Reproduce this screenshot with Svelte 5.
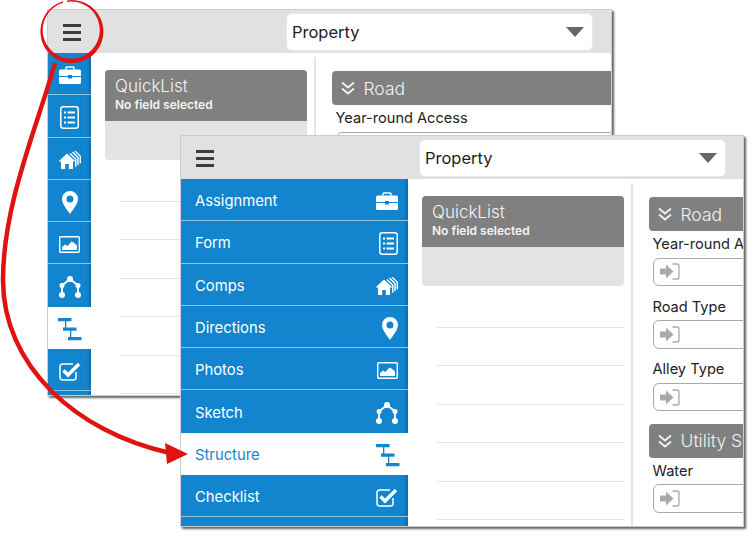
<script>
	const nav = [
		{ label: 'Assignment', icon: 'briefcase' },
		{ label: 'Form', icon: 'form' },
		{ label: 'Comps', icon: 'houses' },
		{ label: 'Directions', icon: 'pin' },
		{ label: 'Photos', icon: 'photo' },
		{ label: 'Sketch', icon: 'sketch' },
		{ label: 'Structure', icon: 'structure', active: true },
		{ label: 'Checklist', icon: 'check' }
	]

	const sections = [
		{ title: 'Road', fields: ['Year-round Access', 'Road Type', 'Alley Type'] },
		{ title: 'Utility Systems', fields: ['Water'] }
	]

	const listRows = [1, 2, 3, 4, 5, 6]
</script>

{#snippet icon(name)}
	{#if name === 'briefcase'}
		<svg class="ico" width="22" height="18" viewBox="0 0 22 18">
			<path d="M7 3.500V2a1 1 0 0 1 1-1h6a1 1 0 0 1 1 1v1.500" fill="none" stroke="currentColor" stroke-width="1.500" />
			<path d="M1.500 3.500h19a1.500 1.500 0 0 1 1.500 1.500v5h-9v-1h-4v1H0V5a1.500 1.500 0 0 1 1.500-1.500z" fill="currentColor" />
			<path d="M0 11h9v1.500h4V11h9v5.500a1.500 1.500 0 0 1-1.500 1.500h-19A1.500 1.500 0 0 1 0 16.500z" fill="currentColor" />
		</svg>
	{:else if name === 'form'}
		<svg class="ico" width="19" height="23" viewBox="0 0 19 23">
			<rect x="0.800" y="0.800" width="17.400" height="21.400" rx="2.500" fill="none" stroke="currentColor" stroke-width="1.500" />
			<path d="M4 5.500h2v2H4zM4 10.500h2v2H4zM4 15.500h2v2H4zM7.500 5.500H15v2H7.500zM7.500 10.500H15v2H7.500zM7.500 15.500H15v2H7.500z" fill="currentColor" />
		</svg>
	{:else if name === 'houses'}
		<svg class="ico" width="22" height="18" viewBox="0 0 22 18">
			<path d="M0 10 8 2.500 16 10l-1 1-1-.8V18h-4.200v-5H6.200v5H2v-7.800l-1 .8z" fill="currentColor" />
			<path d="M11 2.500l5.800 5.800v7.500M13.500 1l5.500 5.500v7.500M16 0l5.300 5.300v7" fill="none" stroke="currentColor" stroke-width="1.400" />
		</svg>
	{:else if name === 'pin'}
		<svg class="ico" width="16" height="23" viewBox="0 0 16 23">
			<path fill-rule="evenodd" d="M8 0a8 8 0 0 1 8 8c0 4.500-4.500 10-8 15-3.500-5-8-10.500-8-15a8 8 0 0 1 8-8zm0 4.500a3.500 3.500 0 1 0 0 7 3.500 3.500 0 0 0 0-7z" fill="currentColor" />
		</svg>
	{:else if name === 'photo'}
		<svg class="ico" width="21" height="17" viewBox="0 0 21 17">
			<rect x="0.700" y="0.700" width="19.600" height="15.600" rx="1" fill="none" stroke="currentColor" stroke-width="1.400" />
			<path d="M3 14v-3l3-2.500 2.500 1.500 4-4.500 2 1 3.500 3V14z" fill="currentColor" />
		</svg>
	{:else if name === 'sketch'}
		<svg class="ico" width="22" height="22" viewBox="0 0 22 22">
			<path d="M3 19V9.500L11 3l8 6.500V19" fill="none" stroke="currentColor" stroke-width="1.800" />
			<circle cx="3" cy="19" r="3" fill="currentColor" />
			<circle cx="3" cy="9.500" r="2.500" fill="currentColor" />
			<circle cx="11" cy="3" r="3" fill="currentColor" />
			<circle cx="19" cy="9.500" r="2.500" fill="currentColor" />
			<circle cx="19" cy="19" r="3" fill="currentColor" />
		</svg>
	{:else if name === 'structure'}
		<svg class="ico" width="24" height="23" viewBox="0 0 24 23">
			<path d="M0 0h13.500v3.300H0zM5 9.500h13.500v3.300H5zM10 19h13.500v3.300H10z" fill="currentColor" />
			<path d="M7 3h1.300v7H7zM12 12.500h1.300V19H12z" fill="currentColor" />
		</svg>
	{:else if name === 'check'}
		<svg class="ico" width="22" height="20" viewBox="0 0 22 20">
			<path d="M17 11v5.500a2.500 2.500 0 0 1-2.500 2.500h-11A2.500 2.500 0 0 1 1 16.500v-11A2.500 2.500 0 0 1 3.500 3H14" fill="none" stroke="currentColor" stroke-width="1.500" />
			<path d="M4.500 9.500 9 14 20 3" fill="none" stroke="currentColor" stroke-width="3.400" />
		</svg>
	{/if}
{/snippet}

{#snippet appWindow(expanded)}
	<div class="toolbar">
		<button class="burger" aria-label="Menu"><i></i><i></i><i></i></button>
		<div class="select">
			<span>Property</span>
			<svg width="18" height="10" viewBox="0 0 18 10"><path d="M0 0h18L9 10z" fill="#666" /></svg>
		</div>
	</div>
	<div class="body">
		<nav class="sidebar" class:expanded>
			{#each nav as item}
				<div class="nav-item" class:active={item.active}>
					{#if expanded}<span>{item.label}</span>{/if}
					{@render icon(item.icon)}
				</div>
			{/each}
			<div class="nav-rest"></div>
		</nav>
		<div class="main">
			<div class="left">
				<div class="quick">
					<div class="quick-head">
						<div class="quick-title">QuickList</div>
						<div class="quick-sub">No field selected</div>
					</div>
				</div>
				{#each listRows as row (row)}
					<div class="list-row"></div>
				{/each}
			</div>
			<div class="right">
				{#each sections as section}
					<div class="section-head">
						<svg width="14" height="14" viewBox="0 0 14 14">
							<path d="M1 1.500l6 5 6-5M1 7.500l6 5 6-5" fill="none" stroke="#f2f2f2" stroke-width="1.800" />
						</svg>
						<span>{section.title}</span>
					</div>
					{#each section.fields as field}
						<div class="field">
							<div class="field-label">{field}</div>
							<div class="field-input">
								<svg width="20" height="17" viewBox="0 0 20 17">
									<path d="M0 5.500h6V1.500l7.500 7-7.500 7v-4H0z" fill="#aaa" />
									<path d="M12.500 1H17a2 2 0 0 1 2 2v11a2 2 0 0 1-2 2h-4.500" fill="none" stroke="#aaa" stroke-width="1.300" />
								</svg>
							</div>
						</div>
					{/each}
				{/each}
			</div>
		</div>
	</div>
{/snippet}

<div class="desktop">
	<section class="window back">{@render appWindow(false)}</section>
	<section class="window front">{@render appWindow(true)}</section>

	<!-- red callout from the burger button to the open menu -->
	<svg class="callout" width="750" height="534" viewBox="0 0 750 534">
		<path d="M67 .4A31.500 31.500 0 1 1 63 1.300L63 2.800A28.500 28.500 0 1 0 67 1.900Z" fill="#e01212" />
		<path d="M55 63C36 130 3 205 3 280 3 365 75 432 170 453" fill="none" stroke="#e01212" stroke-width="4.500" />
		<path d="M165 443l23 11-21 10z" fill="#e01212" />
	</svg>
</div>

<style>
	:global(body) {
		margin: 0;
		background: #fff;
	}

	.desktop {
		position: relative;
		width: 750px;
		height: 534px;
		overflow: hidden;
		font-family: Inter, "Liberation Sans", sans-serif;
	}

	.window {
		position: absolute;
		display: flex;
		flex-direction: column;
		overflow: hidden;
		background: #fff;
		border: 1px solid #ccc;
		box-sizing: border-box;
		box-shadow: 2px 2px 2px #666;
	}

	.back {
		left: 47px;
		top: 9px;
		width: 565px;
		height: 387px;
	}

	.front {
		left: 180px;
		top: 135px;
		width: 564px;
		height: 392px;
	}

	.callout {
		position: absolute;
		left: 0;
		top: 0;
		pointer-events: none;
	}

	.toolbar {
		display: flex;
		align-items: center;
		flex: none;
		box-sizing: border-box;
		height: 43px;
		padding-top: 1px;
		background: #e1e1e1;
	}

	.burger {
		display: flex;
		flex-direction: column;
		gap: 4px;
		width: 18px;
		margin-left: 15px;
		padding: 0;
		border: 0;
		background: none;
	}

	.burger i {
		display: block;
		height: 3px;
		background: #3c3c3c;
	}

	.select {
		display: flex;
		align-items: center;
		justify-content: space-between;
		box-sizing: border-box;
		width: 307px;
		height: 38px;
		margin-left: 205px;
		padding: 0 8px 0 5px;
		border: 1px solid #e8e8e8;
		border-radius: 6px;
		background: #fff;
		font-size: 16.500px;
		color: #222;
	}

	.body {
		display: flex;
		flex: 1;
		min-height: 0;
	}

	.sidebar {
		display: flex;
		flex-direction: column;
		flex: none;
		width: 43px;
		background: #1285ce;
		box-shadow: inset -4px 0 3px -2px #0d6ba8;
	}

	.sidebar.expanded {
		width: 227px;
	}

	.nav-item {
		display: flex;
		align-items: center;
		justify-content: center;
		flex: none;
		box-sizing: border-box;
		height: 42.300px;
		padding-top: 3px;
		border-bottom: 1.500px solid #8fc4e6;
		color: #fff;
		font-size: 14.800px;
	}

	.expanded .nav-item {
		justify-content: space-between;
		padding: 3px 10px 0 14px;
	}

	.expanded .active .ico {
		margin-right: -1.500px;
	}

	.nav-item.active {
		background: #fff;
		color: #1285ce;
		border-bottom: 0;
	}

	.nav-item:has(+ .active) {
		border-bottom: 0;
	}

	.nav-rest {
		flex: 1;
	}

	.ico {
		flex: none;
	}

	.main {
		display: flex;
		flex: 1;
		min-width: 0;
		overflow: hidden;
	}

	.left {
		flex: none;
		box-sizing: border-box;
		width: 224.500px;
		height: 100%;
		margin-top: 4px;
		padding: 13px 7px 0 14px;
		border-right: 2px solid #e4e4e4;
	}

	.quick {
		height: 90px;
		border-radius: 4px;
		background: #e3e3e3;
		overflow: hidden;
	}

	.quick-head {
		box-sizing: border-box;
		height: 51px;
		padding: 6px 10px;
		background: #808080;
		color: #f4f4f4;
	}

	.quick-title {
		font-size: 17px;
		font-weight: 300;
		line-height: 21px;
	}

	.quick-sub {
		font-size: 12px;
		font-weight: 600;
		line-height: 16px;
	}

	.list-row {
		box-sizing: border-box;
		height: 38.600px;
		margin-left: 15px;
		border-bottom: 1.500px solid #e6e6e6;
	}

	.left .quick + .list-row {
		height: 41.500px;
	}

	.right {
		flex: none;
		width: 400px;
		padding: 18px 0 0 16px;
	}

	.section-head {
		display: flex;
		align-items: center;
		gap: 9px;
		box-sizing: border-box;
		height: 34px;
		margin-bottom: 3px;
		padding-left: 9px;
		border-radius: 4px 0 0 4px;
		background: #808080;
		color: #f2f2f2;
		font-size: 17.500px;
		font-weight: 300;
	}

	.field + .section-head {
		margin-top: 1.500px;
	}

	.field {
		margin-left: 4px;
		padding-bottom: 10.700px;
	}

	.field-label {
		margin-bottom: 3.600px;
		font-size: 14.600px;
		line-height: 20px;
		color: #222;
	}

	.field-input {
		display: flex;
		align-items: center;
		box-sizing: border-box;
		height: 28.400px;
		padding-left: 6px;
		border: 1px solid #aaa;
		border-radius: 6px;
	}
</style>
